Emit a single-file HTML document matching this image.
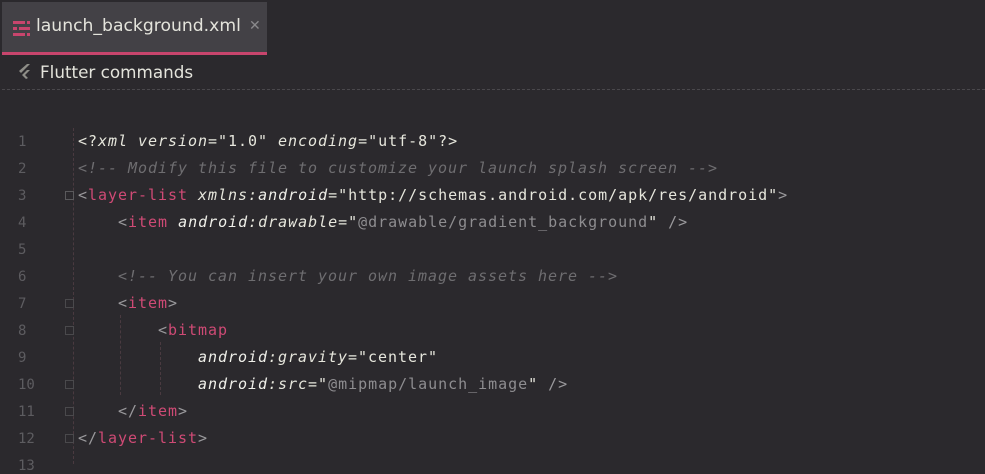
<!DOCTYPE html>
<html><head><style>
body{margin:0;width:985px;height:464px;background:#2b292d;overflow:hidden;font-family:"DejaVu Sans","Liberation Sans",sans-serif;position:relative}
.tab{position:absolute;left:2px;top:2px;width:265px;height:50px;background:#434146;}
.tab .u{position:absolute;left:0;bottom:-3px;width:265px;height:3px;background:#c8456d}
.tab .t{position:absolute;left:34px;top:14px;color:#e4e4dc;font-size:17.2px}
.tab .x{position:absolute;left:247px;top:16px;color:#8a898c;font-size:14px}
.fc{position:absolute;left:40px;top:62px;color:#e4e4dc;font-size:16.8px}
.sep{position:absolute;left:2px;top:89px;width:983px;border-top:1px dashed #4a484c}
.ln{position:absolute;left:0;width:40px;text-align:left;padding-left:18px;color:#5d5c60;font:14px "DejaVu Sans Mono",monospace}
.code{position:absolute;left:78px;font:15px "DejaVu Sans Mono",monospace;letter-spacing:0.97px;white-space:pre;color:#e6e6dc}
.tg{color:#cf4a75}.p{color:#9a999c}.i{font-style:italic}.c{color:#6e6d70;font-style:italic}.g{color:#8e8d90}.w{color:#f0f0ea;font-style:italic}
.vl{position:absolute;width:0;border-left:1px dashed #4a3a40}
.fold{position:absolute;left:65px;width:7px;height:7px;border:1px solid #4a494c}
</style></head><body>
<div class="tab">
<svg style="position:absolute;left:11px;top:19px" width="18" height="16"><g fill="#c8456d"><rect x="0" y="0" width="12" height="3"/><rect x="14" y="0" width="3" height="3"/><rect x="0" y="6" width="4" height="3"/><rect x="6" y="6" width="11" height="3"/><rect x="0" y="12" width="12" height="3"/><rect x="14" y="12" width="3" height="3"/></g></svg>
<div class="t">launch_background.xml</div><div class="x">✕</div><div class="u"></div></div>
<svg style="position:absolute;left:18px;top:64px" width="14" height="16"><path d="M9 0 L12 0 L3 9 L1 7Z M9 6 L12 6 L7 11 L10 14 L8 15 L4 11Z" fill="#8f8e88"/></svg>
<div class="fc">Flutter commands</div>
<div class="sep"></div>
<div class="vl" style="left:73px;top:128px;height:336px"></div>
<div class="vl" style="left:120px;top:315px;height:80px"></div>
<div class="vl" style="left:160px;top:342px;height:53px"></div>
<div class="fold" style="top:191px;border-color:#5a595c"></div>
<div class="fold" style="top:299px"></div>
<div class="fold" style="top:326px"></div>
<div class="fold" style="top:380px"></div>
<div class="fold" style="top:407px"></div>
<div class="fold" style="top:434px"></div>
<div class="ln" style="top:134px">1</div><div class="ln" style="top:161px">2</div><div class="ln" style="top:188px">3</div><div class="ln" style="top:215px">4</div><div class="ln" style="top:242px">5</div><div class="ln" style="top:269px">6</div><div class="ln" style="top:296px">7</div><div class="ln" style="top:323px">8</div><div class="ln" style="top:350px">9</div><div class="ln" style="top:377px">10</div><div class="ln" style="top:404px">11</div><div class="ln" style="top:431px">12</div><div class="ln" style="top:458px">13</div>
<div class="code" style="top:132px">&lt;?<span class="i">xml version</span>="1.0" <span class="i">encoding</span>="utf-8"?&gt;</div>
<div class="code" style="top:159px"><span class="c">&lt;!-- Modify this file to customize your launch splash screen --&gt;</span></div>
<div class="code" style="top:186px"><span class="p">&lt;</span><span class="tg">layer-list</span> <span class="i">xmlns:</span><span class="w">android</span>="http://schemas.android.com/apk/res/android"<span class="p">&gt;</span></div>
<div class="code" style="top:213px">    <span class="p">&lt;</span><span class="tg">item</span> <span class="w">android</span><span class="i">:drawable</span>="<span class="g">@drawable/gradient_background</span>" <span class="p">/&gt;</span></div>
<div class="code" style="top:267px">    <span class="c">&lt;!-- You can insert your own image assets here --&gt;</span></div>
<div class="code" style="top:294px">    <span class="p">&lt;</span><span class="tg">item</span><span class="p">&gt;</span></div>
<div class="code" style="top:321px">        <span class="p">&lt;</span><span class="tg">bitmap</span></div>
<div class="code" style="top:348px">            <span class="w">android</span><span class="i">:gravity</span>="center"</div>
<div class="code" style="top:375px">            <span class="w">android</span><span class="i">:src</span>="<span class="g">@mipmap/launch_image</span>" <span class="p">/&gt;</span></div>
<div class="code" style="top:402px">    <span class="p">&lt;/</span><span class="tg">item</span><span class="p">&gt;</span></div>
<div class="code" style="top:429px"><span class="p">&lt;/</span><span class="tg">layer-list</span><span class="p">&gt;</span></div>
</body></html>
